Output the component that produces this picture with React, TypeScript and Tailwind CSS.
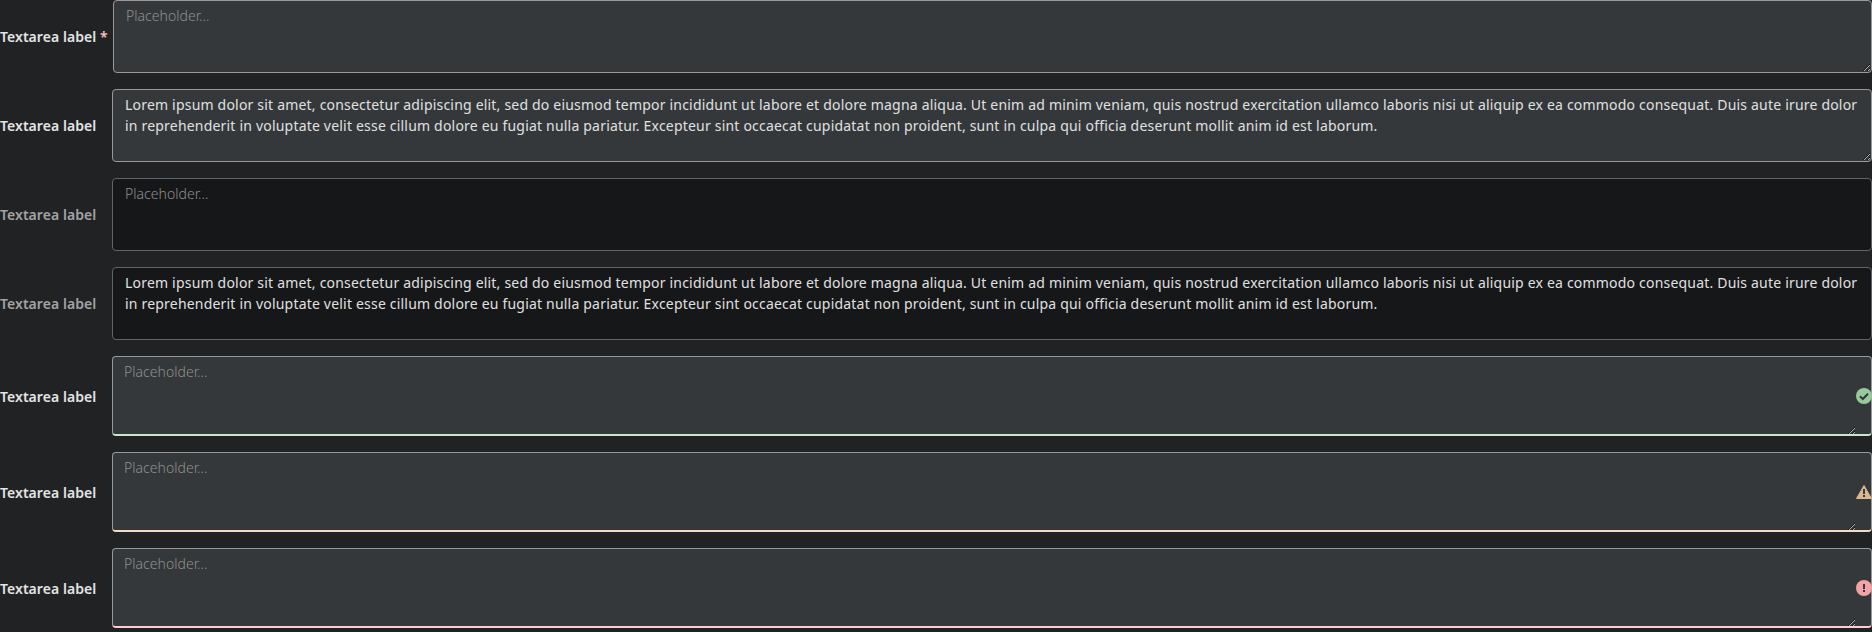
import type { ReactNode } from "react";

const LOREM =
  "Lorem ipsum dolor sit amet, consectetur adipiscing elit, sed do eiusmod tempor incididunt ut labore et dolore magna aliqua. Ut enim ad minim veniam, quis nostrud exercitation ullamco laboris nisi ut aliquip ex ea commodo consequat. Duis aute irure dolor in reprehenderit in voluptate velit esse cillum dolore eu fugiat nulla pariatur. Excepteur sint occaecat cupidatat non proident, sunt in culpa qui officia deserunt mollit anim id est laborum.";

function Row({ required, muted, children }: { required?: boolean; muted?: boolean; children: ReactNode }) {
  return (
    <div className="flex items-center">
      <label
        className={`shrink-0 whitespace-nowrap text-sm leading-[21px] font-semibold tracking-[0.05px] ${
          required ? "w-[113px]" : "w-[112px]"
        } ${muted ? "text-[#a3a3a3]" : "text-[#e4e4e4]"}`}
      >
        Textarea label
        {required && <span className="text-[#f9c6c6]"> *</span>}
      </label>
      {children}
    </div>
  );
}

function Field({ value, disabled }: { value?: string; disabled?: boolean }) {
  return (
    <textarea
      rows={3}
      defaultValue={value}
      disabled={disabled}
      placeholder="Placeholder..."
      className={`block h-[73px] min-w-0 grow rounded-[4px] border px-3 py-1 text-sm leading-[21px] tracking-[0.197px] text-[#e0e0e0] outline-none placeholder:font-light placeholder:tracking-[0.03px] placeholder:text-[#8f8f8f] ${
        disabled ? "resize-none border-[#5f666a] bg-[#161719]" : "resize-y border-[#999999] bg-[#34383a]"
      }`}
    />
  );
}

function StatusField({ edge, children }: { edge: string; children: ReactNode }) {
  return (
    <div
      className={`flex h-20 min-w-0 grow items-center rounded-[4px] border border-b-2 border-[#999999] bg-[#34383a] ${edge}`}
    >
      <textarea
        rows={3}
        placeholder="Placeholder..."
        className="block h-[78px] min-w-0 grow resize-y self-start bg-transparent px-[11px] py-1 text-sm leading-[21px] text-[#e0e0e0] outline-none placeholder:font-light placeholder:tracking-[0.03px] placeholder:text-[#8f8f8f]"
      />
      <svg viewBox="0 0 16 16" className="-mr-px size-4 shrink-0">
        {children}
      </svg>
    </div>
  );
}

export default function App() {
  return (
    <main className="flex h-[632px] flex-col gap-4 bg-[#212224] font-['Noto_Sans',sans-serif] scheme-dark">
      <Row required>
        <Field />
      </Row>
      <Row>
        <Field value={LOREM} />
      </Row>
      <Row muted>
        <Field disabled />
      </Row>
      <Row muted>
        <Field value={LOREM} disabled />
      </Row>
      <Row>
        <StatusField edge="border-b-[#c8e6c9]">
          <circle cx="8" cy="8" r="8" fill="#99c99a" />
          <path d="M4 8.3 6.8 11 12 5.7" fill="none" stroke="#34383a" strokeWidth="2" />
        </StatusField>
      </Row>
      <Row>
        <StatusField edge="border-b-[#f0dcc4]">
          <path d="M8 1.5 15.5 14.5H0.5Z" fill="#d9b78f" stroke="#d9b78f" strokeLinejoin="round" />
          <path d="M7 5h2v5H7zM7 11h2v2H7z" fill="#34383a" />
        </StatusField>
      </Row>
      <Row>
        <StatusField edge="border-b-[#fccccf]">
          <circle cx="8" cy="8" r="8" fill="#f3a3a5" />
          <path d="M7 4h2v5H7zM7 10h2v2H7z" fill="#34383a" />
        </StatusField>
      </Row>
    </main>
  );
}
